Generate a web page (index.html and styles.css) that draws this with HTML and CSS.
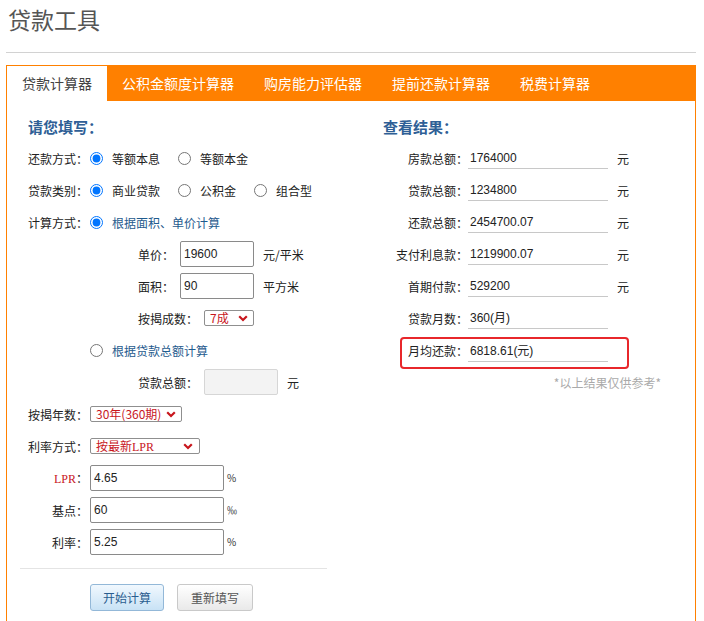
FILE: index.html
```html
<!DOCTYPE html>
<html lang="zh-CN">
<head>
<meta charset="utf-8">
<title>贷款工具</title>
<link rel="stylesheet" href="styles.css">
</head>
<body>
<h1 class="title">贷款工具</h1>
<div class="rule"></div>
<div class="box">
  <div class="tabs">
    <div class="tab active">贷款计算器</div>
    <div class="tab">公积金额度计算器</div>
    <div class="tab">购房能力评估器</div>
    <div class="tab">提前还款计算器</div>
    <div class="tab">税费计算器</div>
  </div>
  <div class="panel">
    <div class="left">
      <div class="heading">请您填写：</div>
      <div class="row">
        <span class="lab">还款方式：</span>
        <input type="radio" name="hk" checked><span class="opt">等额本息</span>
        <input type="radio" name="hk"><span class="opt">等额本金</span>
      </div>
      <div class="row">
        <span class="lab">贷款类别：</span>
        <input type="radio" name="lb" checked><span class="opt">商业贷款</span>
        <input type="radio" name="lb"><span class="opt">公积金</span>
        <input type="radio" name="lb"><span class="opt">组合型</span>
      </div>
      <div class="row">
        <span class="lab">计算方式：</span>
        <input type="radio" name="js" checked><span class="opt link">根据面积、单价计算</span>
      </div>
      <div class="row sub">
        <span class="slab">单价：</span>
        <input class="inp" type="text" value="19600"><span class="unit">元/平米</span>
      </div>
      <div class="row sub">
        <span class="slab">面积：</span>
        <input class="inp" type="text" value="90"><span class="unit">平方米</span>
      </div>
      <div class="row sub">
        <span class="slab">按揭成数：</span>
        <span class="sel w-cs"><span>7成</span><svg class="chev" viewBox="0 0 10 7" width="10" height="7"><polyline points="1.2,1.2 5,5 8.8,1.2" /></svg></span>
      </div>
      <div class="row indent">
        <input type="radio" name="js"><span class="opt link">根据贷款总额计算</span>
      </div>
      <div class="row sub">
        <span class="slab">贷款总额：</span>
        <input class="inp off" type="text" disabled><span class="unit">元</span>
      </div>
      <div class="row">
        <span class="lab">按揭年数：</span>
        <span class="sel w-ns"><span>30年(360期)</span><svg class="chev" viewBox="0 0 10 7" width="10" height="7"><polyline points="1.2,1.2 5,5 8.8,1.2" /></svg></span>
      </div>
      <div class="row">
        <span class="lab">利率方式：</span>
        <span class="sel w-fs"><span>按最新<span class="serif">LPR</span></span><svg class="chev" viewBox="0 0 10 7" width="10" height="7"><polyline points="1.2,1.2 5,5 8.8,1.2" /></svg></span>
      </div>
      <div class="row">
        <span class="lab"><span class="red serif">LPR</span>：</span>
        <input class="inp wide" type="text" value="4.65"><span class="pct">%</span>
      </div>
      <div class="row">
        <span class="lab">基点：</span>
        <input class="inp wide" type="text" value="60"><span class="pct">‰</span>
      </div>
      <div class="row">
        <span class="lab">利率：</span>
        <input class="inp wide" type="text" value="5.25"><span class="pct">%</span>
      </div>
      <div class="sep"></div>
      <div class="btns">
        <button class="btn primary">开始计算</button>
        <button class="btn">重新填写</button>
      </div>
    </div>
    <div class="right">
      <div class="heading">查看结果：</div>
      <div class="rrow"><span class="rlab">房款总额：</span><span class="val">1764000</span><span class="runit">元</span></div>
      <div class="rrow"><span class="rlab">贷款总额：</span><span class="val">1234800</span><span class="runit">元</span></div>
      <div class="rrow"><span class="rlab">还款总额：</span><span class="val">2454700.07</span><span class="runit">元</span></div>
      <div class="rrow"><span class="rlab">支付利息款：</span><span class="val">1219900.07</span><span class="runit">元</span></div>
      <div class="rrow"><span class="rlab">首期付款：</span><span class="val">529200</span><span class="runit">元</span></div>
      <div class="rrow"><span class="rlab">贷款月数：</span><span class="val">360(月)</span></div>
      <div class="hl"><span class="hlab">月均还款：</span><span class="val">6818.61(元)</span></div>
      <div class="note">*以上结果仅供参考*</div>
    </div>
  </div>
</div>
</body>
</html>
```

FILE: styles.css
```css
* { box-sizing: border-box; }
body {
  margin: 0;
  padding: 0 8px 0 6px;
  font-family: "Noto Sans CJK SC", "Liberation Sans", sans-serif;
  font-size: 12px;
  color: #333;
  background: #fff;
}
.title {
  margin: 0;
  padding-left: 2px;
  font-size: 23px;
  font-weight: normal;
  line-height: 38px;
  color: #555;
}
.rule {
  margin-top: 14px;
  margin-bottom: 12px;
  border-top: 1px solid #d2d2d2;
}
.box {
  border: 1px solid #ff8000;
  border-bottom: none;
}
.tabs {
  display: flex;
  height: 35px;
  background: #ff8000;
}
.tab {
  padding: 0 15px;
  line-height: 35px;
  font-size: 14px;
  color: #fff;
  white-space: nowrap;
}
.tab.active {
  background: #fff;
  color: #444;
}
.panel {
  display: flex;
  padding: 11px 0 40px 13px;
}
.left { width: 307px; }
.right { margin-left: 56px; width: 300px; }
.heading {
  height: 30px;
  line-height: 30px;
  font-size: 15px;
  font-weight: bold;
  color: #2f5f96;
}
.left .heading { padding-left: 8px; }
.row {
  display: flex;
  align-items: center;
  height: 32px;
  padding-left: 8px;
  white-space: nowrap;
  color: #222;
}
.row.sub { padding-left: 118px; }
.row.indent { padding-left: 70px; }
.lab {
  width: 60px;
  text-align: right;
  margin-right: 2px;
}
.slab { margin-right: 6px; }
input[type="radio"] {
  width: 13px;
  height: 13px;
  margin: 0 9px 0 0;
}
.opt { margin-right: 18px; }
.link { color: #1f5b8e; }
.red { color: #c8161d; }
.serif { font-family: "Liberation Serif", "Noto Sans CJK SC", serif; }
.inp {
  width: 74px;
  height: 26px;
  border: 1px solid #8a8a8a;
  border-radius: 2px;
  padding: 0 3px;
  font-family: "Liberation Sans", sans-serif;
  font-size: 12px;
  color: #222;
  background: #fff;
}
.inp.wide { width: 134px; }
.inp.off {
  background: #f3f3f3;
  border-color: #d6d6d6;
}
.unit { margin-left: 9px; }
.pct {
  margin-left: 3px;
  font-size: 10px;
  align-self: flex-start;
  margin-top: 8px;
  color: #333;
}
.sel {
  display: inline-flex;
  align-items: center;
  justify-content: space-between;
  height: 16px;
  border: 1px solid #8f8f8f;
  border-radius: 2px;
  padding: 0 5px 0 5px;
  color: #c8161d;
  line-height: 14px;
}
.w-cs { width: 50px; }
.w-ns { width: 92px; }
.w-fs { width: 110px; padding-right: 6px; }
.chev polyline {
  fill: none;
  stroke: #c8161d;
  stroke-width: 2.2;
}
.sep {
  margin-top: 10px;
  border-top: 1px solid #e4e4e4;
}
.btns {
  display: flex;
  gap: 13px;
  padding-left: 70px;
  margin-top: 15px;
}
.btn {
  height: 27px;
  padding: 0;
  border-radius: 3px;
  font-family: "Noto Sans CJK SC", sans-serif;
  font-size: 12px;
  cursor: pointer;
}
.btn.primary {
  width: 74px;
  border: 1px solid #93b8d8;
  background: linear-gradient(#f1f8fe, #c8e2f5);
  color: #2a5d8f;
}
.btn:not(.primary) {
  width: 76px;
  border: 1px solid #c9c9c9;
  background: linear-gradient(#ffffff, #e9e9e9);
  color: #555;
}
.rrow {
  display: flex;
  align-items: center;
  height: 32px;
  white-space: nowrap;
  color: #222;
}
.rlab {
  width: 85px;
  text-align: right;
}
.val {
  width: 140px;
  height: 22px;
  line-height: 22px;
  padding-left: 2px;
  border-bottom: 1px solid #c8c8c8;
  font-family: "Liberation Sans", "Noto Sans CJK SC", sans-serif;
  color: #222;
}
.runit { margin-left: 9px; }
.hl {
  display: flex;
  align-items: flex-start;
  width: 229px;
  height: 32px;
  margin-top: 3px;
  margin-left: 17px;
  padding-top: 1px;
  border: 2px solid #e8272b;
  border-radius: 4px;
  white-space: nowrap;
  color: #222;
}
.hlab {
  width: 66px;
  text-align: right;
  line-height: 22px;
}
.note {
  width: 278px;
  text-align: right;
  line-height: 28px;
  color: #aaa;
}
```
